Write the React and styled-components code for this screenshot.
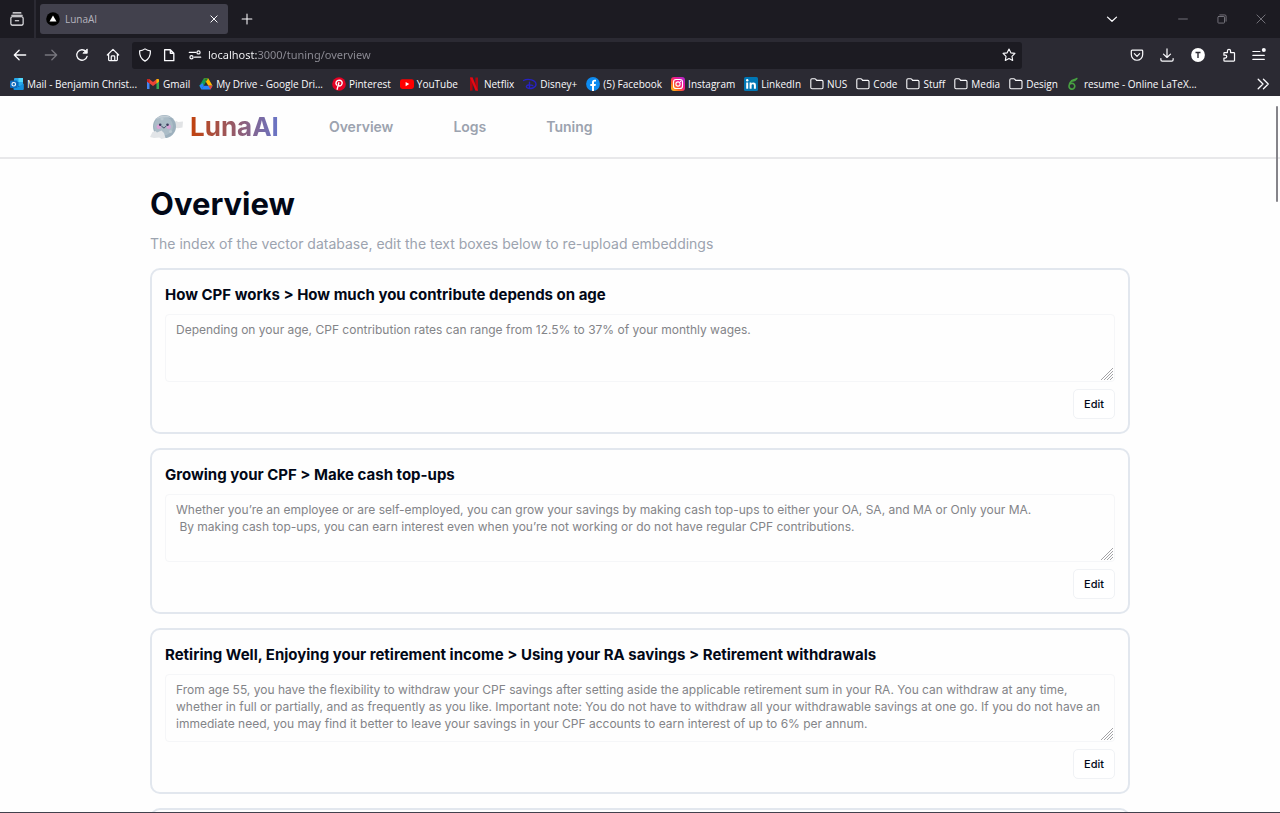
import React, { useState } from 'react';
import styled, { createGlobalStyle } from 'styled-components';

const GlobalStyle = createGlobalStyle`
  * {
    box-sizing: border-box;
  }
  body {
    margin: 0;
    background: #fefefe;
    font-family: Inter, "Liberation Sans", sans-serif;
    color: #020817;
  }
  button, input, textarea {
    font-family: inherit;
    margin: 0;
  }
`;

const Window = styled.div`
  display: flex;
  flex-direction: column;
  height: 100vh;
  overflow: hidden;
  border-bottom: 1px solid #42414d;
`;

/* ---------- browser chrome ---------- */

const Chrome = styled.div`
  flex: none;
  background: #2b2a33;
  color: #fbfbfe;
  font-family: "Noto Sans", "Open Sans", sans-serif;
  font-size: 11px;
`;

const TabBar = styled.div`
  display: flex;
  align-items: center;
  height: 38px;
  background: #1c1b22;
`;

const IconButton = styled.button`
  display: flex;
  flex: none;
  align-items: center;
  justify-content: center;
  width: ${({ $width }) => $width || 30}px;
  height: 28px;
  padding: 0;
  border: none;
  background: none;
  color: ${({ $dim }) => ($dim ? '#77767e' : '#fbfbfe')};
  cursor: pointer;
`;

const TabDivider = styled.div`
  width: 2px;
  height: 38px;
  margin-right: 4px;
  background: #2b2a33;
`;

const Tab = styled.div`
  display: flex;
  align-items: center;
  gap: 5px;
  width: 188px;
  height: 30px;
  padding-left: 6px;
  border-radius: 3px;
  background: #42414d;
  color: #b5b4bd;
  font-family: "Open Sans", sans-serif;
  font-size: 10px;
`;

const TabTitle = styled.span`
  flex: 1;
`;

const Spacer = styled.div`
  flex: 1;
`;

const WindowButtons = styled.div`
  display: flex;
  align-items: center;
  margin-left: 37px;
`;

const Toolbar = styled.div`
  display: flex;
  align-items: center;
  height: 34px;
  padding: 0 6px 0 4px;
`;

const AddressBar = styled.label`
  display: flex;
  flex: 1;
  align-items: center;
  height: 27px;
  margin: 0 100px 0 4px;
  padding-left: 1px;
  border-radius: 3px;
  background: #1c1b22;
`;

const AddressInput = styled.input`
  flex: 1;
  min-width: 0;
  padding: 0;
  border: none;
  outline: none;
  background: linear-gradient(90deg, #fbfbfe 49px, #8f8e97 49px);
  background-clip: text;
  -webkit-text-fill-color: transparent;
  color: #fbfbfe;
  font-size: 11px;
  line-height: 16px;
`;

const Bookmarks = styled.nav`
  display: flex;
  align-items: center;
  gap: 9px;
  height: 24px;
  padding: 0 8px 0 10px;
`;

const Bookmark = styled.a`
  display: flex;
  flex: none;
  align-items: center;
  gap: 3px;
  color: #fbfbfe;
  font-family: "Open Sans", sans-serif;
  font-size: 10px;
  line-height: 14px;
  text-decoration: none;
  white-space: nowrap;
`;

/* ---------- page ---------- */

const Page = styled.div`
  position: relative;
  flex: 1;
  min-height: 0;
  overflow: hidden;
`;

const ScrollThumb = styled.div`
  position: absolute;
  top: 10px;
  right: 2px;
  width: 2px;
  height: 96px;
  border-radius: 1px;
  background: #85848a;
`;

const Header = styled.header`
  border-bottom: 2px solid #e8e8ea;
`;

const Container = styled.div`
  width: calc(100% - 32px);
  max-width: 980px;
  margin: 0 auto;
`;

const HeaderRow = styled(Container)`
  display: flex;
  align-items: center;
  height: 61px;
`;

const Brand = styled.a`
  display: flex;
  align-items: center;
  gap: 6px;
  margin-right: 50px;
  text-decoration: none;
`;

const BrandName = styled.span`
  background: linear-gradient(90deg, #c2410c, #6875c9);
  background-clip: text;
  color: transparent;
  font-size: 26px;
  font-weight: 700;
  line-height: 32px;
`;

const Nav = styled.nav`
  display: flex;
  gap: 60px;
`;

const NavLink = styled.a`
  color: #9ca3af;
  font-size: 14px;
  font-weight: 600;
  line-height: 20px;
  text-decoration: none;
`;

const Main = styled(Container).attrs({ as: 'main' })`
  padding-top: 23px;
`;

const Heading = styled.h1`
  margin: 0 0 8px;
  font-size: 31px;
  font-weight: 700;
  line-height: 44px;
`;

const Subtitle = styled.p`
  margin: 0 0 14px;
  color: #9ca3af;
  font-size: 14px;
  line-height: 20px;
`;

const CardList = styled.div`
  display: flex;
  flex-direction: column;
  gap: 14px;
`;

const Card = styled.section`
  display: flex;
  flex-direction: column;
  gap: 7px;
  padding: 13px;
  border: 2px solid #e2e7ee;
  border-radius: 10px;
`;

const CardTitle = styled.label`
  font-size: 15px;
  font-weight: 700;
  line-height: 24px;
`;

const Field = styled.div`
  position: relative;
  display: flex;
`;

const TextArea = styled.textarea`
  flex: 1;
  height: 68px;
  padding: 6px 10px;
  border: 1px solid #f5f6f8;
  border-radius: 4px;
  background: transparent;
  color: #838488;
  font-size: 12px;
  line-height: 17px;
  resize: none;
  overflow: hidden;
  outline: none;
`;

const Grip = styled.svg`
  position: absolute;
  right: 2px;
  bottom: 2px;
  pointer-events: none;
`;

const EditButton = styled.button`
  align-self: flex-end;
  height: 30px;
  padding: 0 10px;
  border: 1px solid #f0f2f5;
  border-radius: 5px;
  background: #fff;
  color: #020817;
  font-size: 11px;
  font-weight: 500;
  cursor: pointer;
`;

/* ---------- icons ---------- */

const Line = ({ size = 14, w = 1.2, children }) => (
  <svg
    width={size}
    height={size}
    viewBox="0 0 16 16"
    fill="none"
    stroke="currentColor"
    strokeWidth={w}
    strokeLinecap="round"
    strokeLinejoin="round"
    aria-hidden="true"
  >
    {children}
  </svg>
);

const Favicon = ({ children }) => (
  <svg width="14" height="14" viewBox="0 0 14 14" aria-hidden="true">
    {children}
  </svg>
);

const FolderIcon = () => (
  <svg width="14" height="14" viewBox="0 0 14 14" fill="none" stroke="#fbfbfe" strokeWidth="1.1" strokeLinejoin="round">
    <path d="M.8 3a1.2 1.2 0 0 1 1.2-1.2h2.7c.6 0 .9.2 1.2.6l.7 1h5.2A1.2 1.2 0 0 1 13 4.600v6A1.200 1.200 0 0 1 11.800 11.800H2A1.200 1.200 0 0 1 .8 10.600z" />
  </svg>
);

const OutlookIcon = () => (
  <Favicon>
    <rect x="4" y="1" width="9" height="8" rx="1" fill="#28a8ea" />
    <rect x="8.500" y="1" width="4.500" height="4" fill="#50d9ff" />
    <rect x="4" y="5" width="4.500" height="4" fill="#0364b8" />
    <path d="M3.500 6.500l5.300 3 5-3V12a1 1 0 0 1-1 1h-8.300a1 1 0 0 1-1-1z" fill="#1490df" />
    <rect x="0" y="3.500" width="7.500" height="7.500" rx="1" fill="#0f6cbd" />
    <circle cx="3.750" cy="7.250" r="1.800" fill="none" stroke="#fff" strokeWidth="1.100" />
  </Favicon>
);

const GmailIcon = () => (
  <Favicon>
    <path d="M1 3.500V12h2.500V6z" fill="#4285f4" />
    <path d="M13 3.500V12h-2.500V6z" fill="#34a853" />
    <path d="M1 3.400C1 2 2.500 1.600 3.500 2.300L7 5l3.500-2.700C11.500 1.600 13 2 13 3.400v1L7 9 1 4.500z" fill="#ea4335" />
    <path d="M10.500 2.300C11.500 1.600 13 2 13 3.400v1.100l-2.500 1.900z" fill="#fbbc04" />
    <path d="M3.500 2.300C2.500 1.600 1 2 1 3.400v1.100l2.500 1.900z" fill="#c5221f" />
  </Favicon>
);

const DriveIcon = () => (
  <Favicon>
    <path d="M4.800 1.200L.4 8.800l2.100 3.700L7 4.800z" fill="#0f9d58" />
    <path d="M4.800 1.200h4.400l4.400 7.600H9.300z" fill="#ffba00" />
    <path d="M4.600 8.800h9l-2.100 3.700h-9z" fill="#2684fc" />
    <path d="M.4 8.800L2.500 12.500l2.100-3.700L3.500 6z" fill="#2684fc" />
    <path d="M9.300 8.800h4.300l-2.100 3.700z" fill="#ea4335" />
    <path d="M4.800 1.200h4.400L7 4.800z" fill="#188038" />
  </Favicon>
);

const PinterestIcon = () => (
  <Favicon>
    <circle cx="7" cy="7" r="6.800" fill="#e60023" />
    <path
      d="M5.200 12.200l1.600-6.400M4.500 7.900C3.300 6.200 4.200 3.200 7.200 3.200c2.400 0 3.400 1.800 2.800 3.700C9.400 9 7.300 9.500 6.400 8.200"
      fill="none"
      stroke="#fff"
      strokeWidth="1.400"
      strokeLinecap="round"
    />
  </Favicon>
);

const YouTubeIcon = () => (
  <Favicon>
    <rect x="0" y="2.200" width="14" height="9.800" rx="2.400" fill="#f00" />
    <path d="M5.600 5l3.700 2.100-3.700 2.100z" fill="#fff" />
  </Favicon>
);

const NetflixIcon = () => (
  <Favicon>
    <path d="M3 .5h2.600v13L3 13.700zM8.400.500H11v13.200l-2.600-.2z" fill="#b1060f" />
    <path d="M3 .5h2.600L11 13.700l-2.600-.2z" fill="#e50914" />
  </Favicon>
);

const DisneyIcon = () => (
  <Favicon>
    <path
      d="M.6 3.500C5 1 13 3 13 7.300c0 3.600-5.500 5-8.600 3.600-1.800-.9-.9-2.700 1-2.900 1.700-.2 3.700.2 4.300.6M6.500 5.200v6"
      fill="none"
      stroke="#2722c4"
      strokeWidth="1.400"
      strokeLinecap="round"
    />
  </Favicon>
);

const FacebookIcon = () => (
  <Favicon>
    <circle cx="7" cy="7" r="6.900" fill="#0d8bf1" />
    <path d="M6 14V9.100H4.300V7H6V5.500c0-1.900 1-2.800 2.600-2.800l1.400.1v1.800H9c-.8 0-1 .4-1 1V7h1.900l-.4 2.100H8V14z" fill="#fff" />
  </Favicon>
);

const InstagramIcon = () => (
  <Favicon>
    <defs>
      <linearGradient id="insta" x1="0" y1="1" x2="1" y2="0">
        <stop offset="0" stopColor="#ffd521" />
        <stop offset=".3" stopColor="#ff6a1e" />
        <stop offset=".6" stopColor="#f0168c" />
        <stop offset="1" stopColor="#a52bd8" />
      </linearGradient>
    </defs>
    <rect width="14" height="14" rx="3" fill="url(#insta)" />
    <g fill="none" stroke="#fff" strokeWidth="1.100">
      <rect x="2.500" y="2.500" width="9" height="9" rx="2.600" />
      <circle cx="7" cy="7" r="2.100" />
    </g>
    <circle cx="9.600" cy="4.400" r=".6" fill="#fff" />
  </Favicon>
);

const LinkedInIcon = () => (
  <Favicon>
    <rect width="14" height="14" rx="1.500" fill="#0077b5" />
    <path
      d="M2.200 5.500h2v6.300h-2zM5.600 5.500h1.900v.9c.8-1.500 4.400-1.600 4.400 1.500v3.900h-2V8.500c0-1.900-2.300-1.700-2.300 0v3.300h-2z"
      fill="#fff"
    />
    <circle cx="3.200" cy="3.300" r="1.200" fill="#fff" />
  </Favicon>
);

const OverleafIcon = () => (
  <Favicon>
    <path
      d="M8.500 2.200C5 3 2.200 5.800 2 9a2.900 2.900 0 1 0 3-2.700c-1 0-1.800.4-2.300 1M4.500 3.700c1.700.7 3.700 0 5.300-2.200"
      fill="none"
      stroke="#47a141"
      strokeWidth="1.600"
      strokeLinecap="round"
    />
  </Favicon>
);

const MoonLogo = () => (
  <svg width="34" height="26" viewBox="0 0 34 26" aria-hidden="true">
    <path d="M22 8.500l4.500-1.500 1.500 1 5-.5-.5 6-4.500.8-4-.5z" fill="#e1e3e5" />
    <circle cx="14.500" cy="12.500" r="11.500" fill="#9db0bd" />
    <circle cx="13.500" cy="12" r="9.500" fill="#abbcc7" />
    <path d="M5.500 5.500C9 1 17 0 21.500 4c-5-1.500-11-1-16 1.500z" fill="#c3ced6" />
    <g fill="#bccad2">
      <circle cx="12" cy="4.800" r="1.600" />
      <circle cx="20.500" cy="17.500" r="1.600" />
    </g>
    <circle cx="8.800" cy="12.800" r="2.200" fill="#d9a3d6" />
    <circle cx="18.700" cy="12.800" r="2.200" fill="#d9a3d6" />
    <circle cx="10.200" cy="10.700" r="1.300" fill="#383d5c" />
    <circle cx="17.500" cy="10.700" r="1.300" fill="#383d5c" />
    <path d="M12 12.500c.7 1.800 3 1.800 3.700 0" fill="none" stroke="#383d5c" strokeLinecap="round" />
    <path d="M0 23l2.500-5 3-1 1.500 1.500 4.500-2 2.500 2.500 1.500 5-4 1-2-1.500L4 24z" fill="#e2e5e8" />
  </svg>
);

const bookmarks = [
  { label: 'Mail - Benjamin Christ...', Icon: OutlookIcon },
  { label: 'Gmail', Icon: GmailIcon },
  { label: 'My Drive - Google Dri...', Icon: DriveIcon },
  { label: 'Pinterest', Icon: PinterestIcon },
  { label: 'YouTube', Icon: YouTubeIcon },
  { label: 'Netflix', Icon: NetflixIcon },
  { label: 'Disney+', Icon: DisneyIcon },
  { label: '(5) Facebook', Icon: FacebookIcon },
  { label: 'Instagram', Icon: InstagramIcon },
  { label: 'LinkedIn', Icon: LinkedInIcon },
  { label: 'NUS', Icon: FolderIcon },
  { label: 'Code', Icon: FolderIcon },
  { label: 'Stuff', Icon: FolderIcon },
  { label: 'Media', Icon: FolderIcon },
  { label: 'Design', Icon: FolderIcon },
  { label: 'resume - Online LaTeX...', Icon: OverleafIcon },
];

const entries = [
  {
    title: 'How CPF works > How much you contribute depends on age',
    text: 'Depending on your age, CPF contribution rates can range from 12.5% to 37% of your monthly wages.',
  },
  {
    title: 'Growing your CPF > Make cash top-ups',
    text:
      'Whether you’re an employee or are self-employed, you can grow your savings by making cash top-ups to either your OA, SA, and MA or Only your MA.\n' +
      ' By making cash top-ups, you can earn interest even when you’re not working or do not have regular CPF contributions.',
  },
  {
    title: 'Retiring Well, Enjoying your retirement income > Using your RA savings > Retirement withdrawals',
    text:
      'From age 55, you have the flexibility to withdraw your CPF savings after setting aside the applicable retirement sum in your RA. You can withdraw at any time, whether in full or partially, and as frequently as you like. Important note: You do not have to withdraw all your withdrawable savings at one go. If you do not have an immediate need, you may find it better to leave your savings in your CPF accounts to earn interest of up to 6% per annum.',
  },
];

const BrowserChrome = () => {
  const [url, setUrl] = useState('localhost:3000/tuning/overview');

  return (
    <Chrome>
      <TabBar>
        <IconButton $width={34} aria-label="Recent browsing">
          <Line>
            <path d="M3.500 1h9M2 3.700h12" />
            <rect x="1" y="5.500" width="14" height="9.500" rx="1.500" />
            <path d="M6 10h4" />
          </Line>
        </IconButton>
        <TabDivider />
        <Tab>
          <svg width="14" height="14" viewBox="0 0 14 14" aria-hidden="true">
            <circle cx="7" cy="7" r="6.800" fill="#000" />
            <path d="M7 3.500l3.500 6h-7z" fill="#fff" />
          </svg>
          <TabTitle>LunaAI</TabTitle>
          <IconButton $width={28} aria-label="Close tab">
            <Line size={10} w={1.600}>
              <path d="M3 3l10 10M13 3L3 13" />
            </Line>
          </IconButton>
        </Tab>
        <IconButton $width={37} aria-label="New tab">
          <Line size={12} w={1.400}>
            <path d="M8 1.500v13M1.500 8h13" />
          </Line>
        </IconButton>
        <Spacer />
        <IconButton aria-label="List all tabs">
          <Line size={12} w={1.700}>
            <path d="M2 5.500L8 11l6-5.500" />
          </Line>
        </IconButton>
        <WindowButtons>
          <IconButton $width={38} $dim aria-label="Minimize">
            <Line size={10} w={1.500}>
              <path d="M1 8h14" />
            </Line>
          </IconButton>
          <IconButton $width={40} $dim aria-label="Restore">
            <Line size={10} w={1.500}>
              <rect x="1.500" y="4" width="10.500" height="10.500" rx="1" />
              <path d="M4.500 1.500h8a2 2 0 0 1 2 2v8" />
            </Line>
          </IconButton>
          <IconButton $width={38} $dim aria-label="Close window">
            <Line size={10} w={1.500}>
              <path d="M1.500 1.500l13 13M14.500 1.500l-13 13" />
            </Line>
          </IconButton>
        </WindowButtons>
      </TabBar>

      <Toolbar>
        <IconButton $width={31} aria-label="Back">
          <Line w={1.500}>
            <path d="M14.500 8H1.500M7 2.500L1.500 8 7 13.500" />
          </Line>
        </IconButton>
        <IconButton $width={31} $dim aria-label="Forward">
          <Line w={1.500}>
            <path d="M1.500 8h13M9 2.500L14.500 8 9 13.500" />
          </Line>
        </IconButton>
        <IconButton $width={31} aria-label="Reload">
          <Line w={1.500}>
            <path d="M13.800 9.500A6 6 0 1 1 12.500 4" />
            <path d="M14 1.500V6H9.500z" fill="currentColor" strokeWidth="1" />
          </Line>
        </IconButton>
        <IconButton $width={31} aria-label="Home">
          <Line w={1.400}>
            <path d="M1.500 8L8 1.500 14.500 8M3 7v6.500a1 1 0 0 0 1 1h8a1 1 0 0 0 1-1V7M6 14.500V10a1 1 0 0 1 1-1h2a1 1 0 0 1 1 1v4.500" />
          </Line>
        </IconButton>
        <AddressBar>
          <IconButton as="span" $width={24}>
            <Line w={1.400}>
              <path d="M8 1c2 1.500 4 2.200 6.200 2.200C14.500 9.500 12 13 8 15 4 13 1.500 9.500 1.800 3.200 4 3.200 6 2.500 8 1z" />
            </Line>
          </IconButton>
          <IconButton as="span" $width={24}>
            <Line w={1.500}>
              <path d="M3 2h6.500L13.500 6v8.500H3zM9.500 2v4h4" />
            </Line>
          </IconButton>
          <IconButton as="span" $width={27}>
            <Line w={1.400}>
              <path d="M1.500 5H9M7.500 10.500h7" />
              <circle cx="12" cy="5" r="1.800" />
              <circle cx="4" cy="10.500" r="1.800" />
            </Line>
          </IconButton>
          <AddressInput aria-label="Address" value={url} onChange={(e) => setUrl(e.target.value)} />
          <IconButton $width={27} aria-label="Bookmark this page">
            <Line w={1.300}>
              <path d="M8 1.200l2.100 4.300 4.700.7-3.400 3.300.8 4.700L8 12l-4.200 2.200.8-4.700L1.200 6.200l4.700-.7z" />
            </Line>
          </IconButton>
        </AddressBar>
        <IconButton aria-label="Save to Pocket">
          <Line w={1.400}>
            <path d="M2.500 2.500h11a1 1 0 0 1 1 1V7.500a6.500 6.500 0 0 1-13 0v-4a1 1 0 0 1 1-1zM5 6.500l3 3 3-3" />
          </Line>
        </IconButton>
        <IconButton aria-label="Downloads">
          <Line w={1.400}>
            <path d="M8 1v9.500M4 7l4 3.800L12 7M1 12v1.500A1.500 1.500 0 0 0 2.500 15h11a1.500 1.500 0 0 0 1.500-1.500V12" />
          </Line>
        </IconButton>
        <IconButton $width={32} aria-label="Account">
          <svg width="14" height="14" viewBox="0 0 14 14" aria-hidden="true">
            <circle cx="7" cy="7" r="6.900" fill="#fff" />
            <path d="M4.500 4.500h5M7 4.500V10" stroke="#2b2a33" strokeWidth="1.400" />
          </svg>
        </IconButton>
        <IconButton aria-label="Extensions">
          <Line w={1.400}>
            <path d="M2.500 5.200h3.700V3.300a1.800 1.800 0 0 1 3.600 0v1.900h3.700a.8.800 0 0 1 .8.800v8.200a.8.800 0 0 1-.8.800H3a.8.800 0 0 1-.8-.8V11.500h1.600a1.600 1.600 0 0 0 0-3.300H2.200V5.500" />
          </Line>
        </IconButton>
        <IconButton aria-label="Menu">
          <Line w={1.400}>
            <path d="M1 4h8M1 8.500h13M1 13h13" />
            <circle cx="13.500" cy="2.300" r="2.300" fill="currentColor" stroke="none" />
          </Line>
        </IconButton>
      </Toolbar>

      <Bookmarks aria-label="Bookmarks">
        {bookmarks.map(({ label, Icon }) => (
          <Bookmark key={label} href="#">
            <Icon />
            {label}
          </Bookmark>
        ))}
        <Spacer />
        <IconButton $width={18} aria-label="More bookmarks">
          <Line w={1.500}>
            <path d="M2.500 2.500L8 8l-5.500 5.500M8.500 2.500L14 8l-5.500 5.500" />
          </Line>
        </IconButton>
      </Bookmarks>
    </Chrome>
  );
};

const EntryCard = ({ id, title, text }) => (
  <Card>
    <CardTitle htmlFor={id}>{title}</CardTitle>
    <Field>
      <TextArea id={id} defaultValue={text} readOnly />
      <Grip width="12" height="12" viewBox="0 0 12 12" stroke="#a3a3a6" strokeWidth="1">
        <path d="M0 12L12 0M3 12l9-9M6 12l6-6M9 12l3-3" />
      </Grip>
    </Field>
    <EditButton type="button">Edit</EditButton>
  </Card>
);

const App = () => (
  <>
    <GlobalStyle />
    <Window>
      <BrowserChrome />
      <Page>
        <Header>
          <HeaderRow>
            <Brand href="#">
              <MoonLogo />
              <BrandName>LunaAI</BrandName>
            </Brand>
            <Nav>
              <NavLink href="#">Overview</NavLink>
              <NavLink href="#">Logs</NavLink>
              <NavLink href="#">Tuning</NavLink>
            </Nav>
          </HeaderRow>
        </Header>
        <Main>
          <Heading>Overview</Heading>
          <Subtitle>The index of the vector database, edit the text boxes below to re-upload embeddings</Subtitle>
          <CardList>
            {entries.map((entry, i) => (
              <EntryCard key={entry.title} id={`entry-${i}`} {...entry} />
            ))}
            <Card />
          </CardList>
        </Main>
        <ScrollThumb />
      </Page>
    </Window>
  </>
);

export default App;
